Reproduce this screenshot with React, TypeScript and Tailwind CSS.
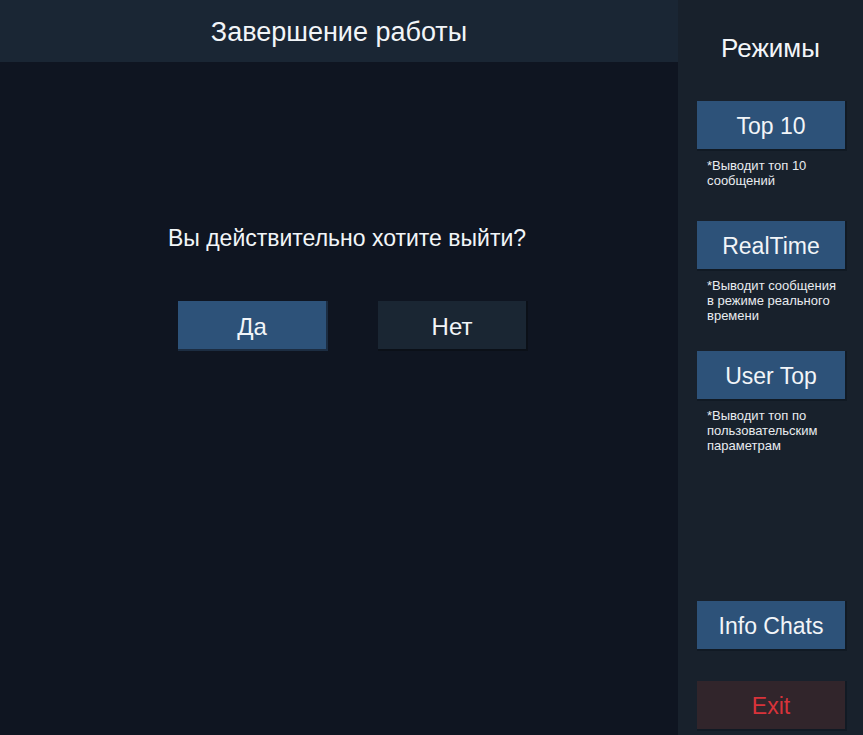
import React from 'react';

const modes = [
  { label: 'Top 10', desc: ['*Выводит топ 10', 'сообщений'], mb: 'mb-[33px]' },
  { label: 'RealTime', desc: ['*Выводит сообщения', 'в режиме реального', 'времени'], mb: 'mb-[28px]' },
  { label: 'User Top', desc: ['*Выводит топ по', 'пользовательским', 'параметрам'], mb: '' },
];

const SideButton: React.FC<{ children: React.ReactNode; danger?: boolean }> = ({ children, danger }) => (
  <button
    className={`w-[150px] h-[50px] pt-[3px] text-[23px] border-b-2 border-r-2 border-[#111a24] ${
      danger ? 'bg-[#31252b] text-[#d8333a]' : 'bg-[#2d5279] text-[#f2f5f8]'
    }`}
  >
    {children}
  </button>
);

export default function App() {
  return (
    <div
      className="flex w-[863px] h-[735px] overflow-hidden bg-[#0f1521] text-white"
      style={{ fontFamily: '"Liberation Sans", Arial, sans-serif' }}
    >
      {/* Main area */}
      <div className="flex flex-col w-[678px]">
        <div className="h-[62px] bg-[#1a2634] flex items-center justify-center">
          <span className="text-[27px] leading-[32px] text-[#f2f5f8] mt-[1px]">Завершение работы</span>
        </div>
        <div className="flex flex-col items-center pt-[162px] pl-[28px]">
          <div className="text-[23px] leading-[28px] text-[#f2f5f8] mr-[12px]">Вы действительно хотите выйти?</div>
          <div className="flex gap-[50px] mt-[49px]">
            <button className="w-[150px] h-[50px] pt-[3px] bg-[#2d5279] text-[24px] text-[#f2f5f8] border-b-2 border-r-2 border-[#1c2d42]">
              Да
            </button>
            <button className="w-[150px] h-[50px] pt-[3px] bg-[#1a2633] text-[24px] text-[#f2f5f8] border-b-2 border-r-2 border-[#0b1018]">
              Нет
            </button>
          </div>
        </div>
      </div>

      {/* Sidebar */}
      <div className="flex flex-col w-[185px] bg-[#18212c] pl-[19px] pb-[4px]">
        <div className="h-[101px] flex items-center justify-center pr-[19px] pb-[6px]">
          <span className="text-[26px] leading-[30px] text-[#f2f5f8]">Режимы</span>
        </div>
        {modes.map((m) => (
          <div key={m.label} className={m.mb}>
            <SideButton>{m.label}</SideButton>
            <div className="pt-[7px] pl-[10px] text-[13px] leading-[15px] text-[#e8ecf0]">
              {m.desc.map((d) => (
                <div key={d}>{d}</div>
              ))}
            </div>
          </div>
        ))}
        <div className="mt-auto flex flex-col gap-[30px]">
          <SideButton>Info Chats</SideButton>
          <SideButton danger>Exit</SideButton>
        </div>
      </div>
    </div>
  );
}
